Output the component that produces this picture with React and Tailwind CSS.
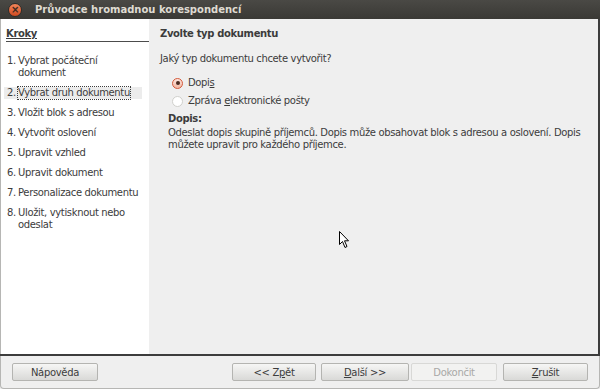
const font = { fontFamily: '"DejaVu Sans", sans-serif' }

const steps = [
  ['1.', 'Vybrat počáteční', 'dokument'],
  ['2.', 'Vybrat druh dokumentu'],
  ['3.', 'Vložit blok s adresou'],
  ['4.', 'Vytvořit oslovení'],
  ['5.', 'Upravit vzhled'],
  ['6.', 'Upravit dokument'],
  ['7.', 'Personalizace dokumentu'],
  ['8.', 'Uložit, vytisknout nebo', 'odeslat'],
]

function Radio({ checked }) {
  return checked ? (
    <span className="flex h-[11px] w-[11px] items-center justify-center rounded-full border border-[#d4593a] bg-gradient-to-b from-[#fbe4dc] to-[#f3b9a5]">
      <span className="h-[4px] w-[4px] rounded-full bg-[#4a2a20]" />
    </span>
  ) : (
    <span className="h-[11px] w-[11px] rounded-full border border-[#d0d0cc] bg-white" />
  )
}

function Button({ children, disabled, className = '' }) {
  return (
    <button
      type="button"
      className={`flex h-[18px] items-center justify-center rounded-[2px] border text-[10px] tracking-[-0.3px] ${
        disabled
          ? 'border-[#d8d8d6] bg-[#f2f2f1] text-[#a8a8a6]'
          : 'border-[#b4b4b1] bg-gradient-to-b from-[#f6f6f5] to-[#d9d9d7] text-[#3c3c3c]'
      } ${className}`}
    >
      {children}
    </button>
  )
}

export default function App() {
  return (
    <div className="relative h-[389px] w-[600px] overflow-hidden bg-[#efefef] text-[#3c3c3c] tracking-[-0.35px]" style={font}>
      <div className="flex h-[19px] items-center bg-gradient-to-b from-[#4a4945] to-[#3a3935]">
        <div className="ml-[8px] flex h-[14px] w-[14px] items-center justify-center rounded-full border border-[#2e2d2a] bg-gradient-to-b from-[#f2855a] to-[#d04a1f] text-[10px] font-bold leading-none text-[#3a2a20]">
          ×
        </div>
        <span className="ml-[13px] text-[10px] font-bold tracking-[0px] text-[#dfdbd2]">Průvodce hromadnou korespondencí</span>
      </div>

      <div className="flex h-[335px] border-l border-r-2 border-l-[#b6b6b4] border-r-[#3c3c3c]">
        <div className="w-[148px] bg-white">
          <div className="ml-[5px] mt-[9px] border-b border-[#4c4c4c] pb-[1px] text-[10px] font-bold leading-[12px]">
            <span className="underline">Kroky</span>
          </div>
          <div className="mt-[13px] flex flex-col gap-[8px] text-[10px] leading-[12px]">
            {steps.map(([n, a, b], i) => (
              <div key={n} className={`ml-[3px] mr-[7px] flex pl-[3px] ${i === 1 ? 'bg-[#ececec]' : ''}`}>
                <span className="w-[11px]">{n}</span>
                <span className={i === 1 ? 'outline-1 outline-dotted outline-[#3c3c3c]' : ''}>
                  {a}
                  {b && <br />}
                  {b}
                </span>
              </div>
            ))}
          </div>
        </div>

        <div className="flex-1 pl-[11px] text-[10px] leading-[12px]">
          <div className="mt-[9px] font-bold">Zvolte typ dokumentu</div>
          <div className="mt-[13px]">Jaký typ dokumentu chcete vytvořit?</div>
          <div className="ml-[12px] mt-[12px] flex items-center gap-[5px]">
            <Radio checked />
            <span>
              Dopi<span className="underline">s</span>
            </span>
          </div>
          <div className="ml-[12px] mt-[6px] flex items-center gap-[5px]">
            <Radio />
            <span>
              Zpráva <span className="underline">e</span>lektronické pošty
            </span>
          </div>
          <div className="ml-[8px] mt-[6px] font-bold">Dopis:</div>
          <div className="ml-[8px] mt-[2px] whitespace-nowrap">
            Odeslat dopis skupině příjemců. Dopis může obsahovat blok s adresou a oslovení. Dopis
            <br />
            můžete upravit pro každého příjemce.
          </div>
        </div>
      </div>

      <div className="h-[2px] bg-[#3c3c3c]" />

      <div className="flex h-[33px] items-center rounded-b-[4px] border-x border-b border-[#b6b6b4] px-[11px]">
        <Button className="w-[86px]">Nápověda</Button>
        <div className="flex-1" />
        <Button className="w-[84px]">
          &lt;&lt; Z<span className="underline">p</span>ět
        </Button>
        <Button className="ml-[5px] w-[88px]">
          <span className="underline">D</span>alší &gt;&gt;
        </Button>
        <Button disabled className="ml-[2px] w-[86px]">
          Dokončit
        </Button>
        <Button className="ml-[6px] w-[85px]">
          <span className="underline">Z</span>rušit
        </Button>
      </div>

      <svg className="absolute left-[339px] top-[231px]" width="12" height="18" viewBox="0 0 12 18">
        <path d="M0.5 0.5 L0.5 13.5 L3.5 10.5 L6 16.5 L8 15.5 L5.5 9.8 L9.5 9.8 Z" fill="white" stroke="black" strokeWidth="1" />
      </svg>
    </div>
  )
}
